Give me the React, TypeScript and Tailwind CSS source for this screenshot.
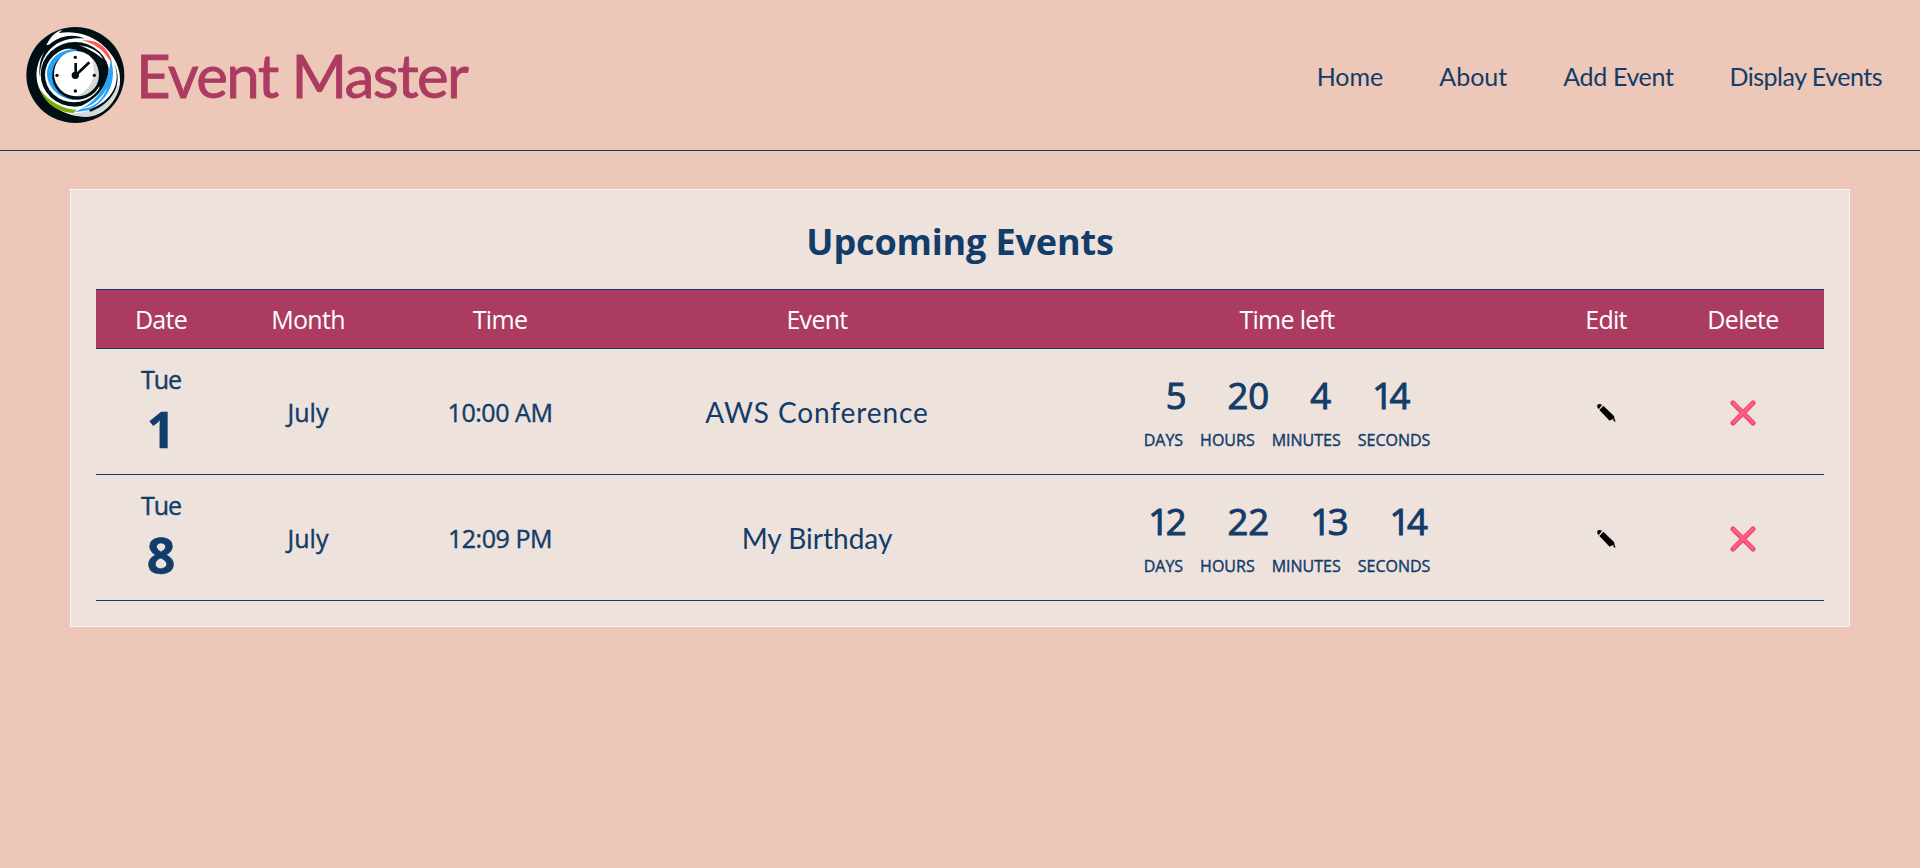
function Logo() {
  return (
    <svg viewBox="0 0 330 330" className="block h-[110px] w-[110px] shrink-0" fill="none">
      <ellipse cx="166" cy="165" rx="147" ry="144" fill="#000f14" />
      <path d="M79 76C90 52 106 33 128 29C122 33 119 36 118 39C160 32 206 42 242 70C284 104 306 150 299 196C290 248 246 292 196 290C144 290 84 262 60 210C38 162 52 108 94 74C88 73 84 74 79 76Z" fill="#fff" />
      <path d="M298 194C290 244 246 290 196 290C178 290 162 286 148 280C208 282 262 252 288 200Z" fill="#d8d8d8" />
      <path d="M94 68C124 46 160 40 196 56C160 52 128 58 104 76C74 98 58 134 60 172C54 134 64 96 94 68Z" fill="#000f14" />
      <ellipse cx="165" cy="163" rx="103" ry="97" fill="#000f14" />
      <path d="M281 126C306 184 280 244 206 269L212 275C274 252 314 194 281 126Z" fill="#000f14" />
      <path d="M186 61C234 56 264 82 277 128L265 116C250 90 222 70 186 61Z" fill="#ff5a4c" />
      <path d="M266 140C268 190 234 240 172 262L176 270C240 252 276 200 266 140Z" fill="#fff" />
      <path d="M272 118C294 184 262 244 206 271L164 277C222 252 264 208 272 118Z" fill="#27a4f8" />
      <path d="M262 200C244 240 214 258 184 266C220 266 250 240 262 200Z" fill="#fff" />
      <path d="M60 208C90 248 126 266 170 270L160 279C116 278 76 254 60 208Z" fill="#79ad09" />
      <ellipse cx="162" cy="165" rx="87" ry="82" fill="#fff" />
      <path d="M172 92C120 84 82 120 81 162C82 204 120 238 166 240C124 222 104 198 103 162C104 124 132 96 172 92Z" fill="#27a4f8" />
      <ellipse cx="171" cy="163" rx="76" ry="76" fill="#000f14" />
      <path d="M170 88C128 84 92 112 85 146C82 172 90 190 102 206C96 184 94 160 102 138C114 112 142 96 170 94Z" fill="#27a4f8" />
      <path d="M112 90C140 66 196 68 228 96C258 124 262 174 240 204L230 190C240 140 220 92 166 88C144 84 128 84 112 90Z" fill="#000f14" />
      <ellipse cx="168" cy="161" rx="66" ry="68" fill="#fff" />
      <path d="M218 116C240 140 244 178 224 204C208 222 190 229 172 229C200 212 220 190 222 160Z" fill="#d8d8d8" />
      <path d="M176 76C212 80 238 94 250 118C230 102 208 86 176 76Z" fill="#fff" />
      <g fill="#000f14">
        <circle cx="166" cy="112" r="5" />
        <circle cx="111" cy="166" r="5" />
        <circle cx="223" cy="166" r="5" />
        <circle cx="166" cy="213" r="5" />
        <circle cx="166" cy="166" r="11" />
      </g>
      <path d="M167 129V166L208 127" stroke="#000f14" strokeWidth="8" />
    </svg>
  );
}

function Pencil() {
  return (
    <svg viewBox="0 0 60 60" className="h-5 w-5">
      <path d="M4 6Q9 0 18 5L8 19Q1 13 4 6ZM22 8L54 39L56 47L49 49L41 53L10 21ZM50 50L57 48L58 58Z" fill="#000" />
    </svg>
  );
}

function Cross() {
  return (
    <svg viewBox="0 0 26 26" className="h-[26px] w-[26px]" strokeLinecap="round">
      <path d="M3 3L23 23M23 3L3 23" stroke="#f04468" strokeWidth="5" />
      <path d="M3.4 3L22.6 22.2M22.6 3L3.4 22.2" stroke="#ff5c88" strokeWidth="3" />
    </svg>
  );
}

const cols = "grid grid-cols-[130px_164px_220px_414px_526px_112px_162px]";

const links = [
  { label: "Home", track: "tracking-normal" },
  { label: "About", track: "tracking-normal" },
  { label: "Add Event", track: "tracking-[-0.35px]" },
  { label: "Display Events", track: "tracking-[-0.5px]" },
];

const events = [
  { day: "Tue", date: "1", month: "July", time: "10:00 AM", name: "AWS Conference", track: "tracking-[0.9px]", left: ["5", "20", "4", "14"] },
  { day: "Tue", date: "8", month: "July", time: "12:09 PM", name: "My Birthday", track: "tracking-normal", left: ["12", "22", "13", "14"] },
];

function Count({ value }: { value: string }) {
  return (
    <span>
      {value.startsWith("1") ? (
        <>
          <span className="tracking-[-3.5px]">1</span>
          {value.slice(1)}
        </>
      ) : (
        value
      )}
    </span>
  );
}

export default function App() {
  return (
    <div className="h-[868px] overflow-hidden bg-[#edc7b7] font-['Open_Sans',sans-serif] text-[#123c69]">
      <header className="flex h-[151px] items-center justify-between border-b border-[#123c69] pl-5 pr-[38px] font-['Lato',sans-serif]">
        <div className="flex items-center gap-[6px]">
          <Logo />
          <h1 className="text-[60px] leading-[72px] tracking-[-1.6px] text-[#ac3b61] [-webkit-text-stroke:0.8px_#ac3b61]">Event Master</h1>
        </div>
        <nav className="flex gap-[56px] pt-[2px] text-[25px] leading-[30px]">
          {links.map((l) => (
            <a key={l.label} className={l.track}>{l.label}</a>
          ))}
        </nav>
      </header>
      <main className="mx-[70px] mt-[38px] h-[438px] border border-dotted border-white bg-[#eee2dc] px-[25px] pt-[27px]">
        <h2 className="mb-[22px] text-center text-[36px] font-bold leading-[50px] tracking-[-0.15px]">Upcoming Events</h2>
        <div className={cols + " h-[60px] items-center border-y border-[#123c69] bg-[#ac3b61] pt-[2px] text-center text-[25px] tracking-[-0.7px] text-white"}>
          {["Date", "Month", "Time", "Event", "Time left", "Edit", "Delete"].map((h) => (
            <span key={h}>{h}</span>
          ))}
        </div>
        {events.map((e) => (
          <div key={e.date} className={cols + " h-[126px] items-center border-b border-[#123c69] text-center text-[25px] [-webkit-text-stroke:0.4px_#123c69]"}>
            <div className="pb-px">
              <div className="mb-px leading-[34px] tracking-[-1px]">{e.day}</div>
              <div className="text-[50px] font-bold leading-[64px]">{e.date}</div>
            </div>
            <div className="pt-[2px]">{e.month}</div>
            <div className="pt-[2px] tracking-[-0.45px]">{e.time}</div>
            <div className={e.track + " font-['Lato',sans-serif] text-[28px] [-webkit-text-stroke:0px]"}>{e.name}</div>
            <div className="pb-px">
              <div className="flex justify-center gap-[41px] pl-[2px] text-[36.5px] leading-[50px] [-webkit-text-stroke:1px_#123c69]">
                {e.left.map((n, i) => (
                  <Count key={i} value={n} />
                ))}
              </div>
              <div className="mt-2 flex justify-center gap-[17px] text-[16px] leading-[24px]">
                {["DAYS", "HOURS", "MINUTES", "SECONDS"].map((n) => (
                  <span key={n}>{n}</span>
                ))}
              </div>
            </div>
            <div className="flex justify-center pr-px pt-[2px]"><Pencil /></div>
            <div className="flex justify-center pt-[2px]"><Cross /></div>
          </div>
        ))}
      </main>
    </div>
  );
}
